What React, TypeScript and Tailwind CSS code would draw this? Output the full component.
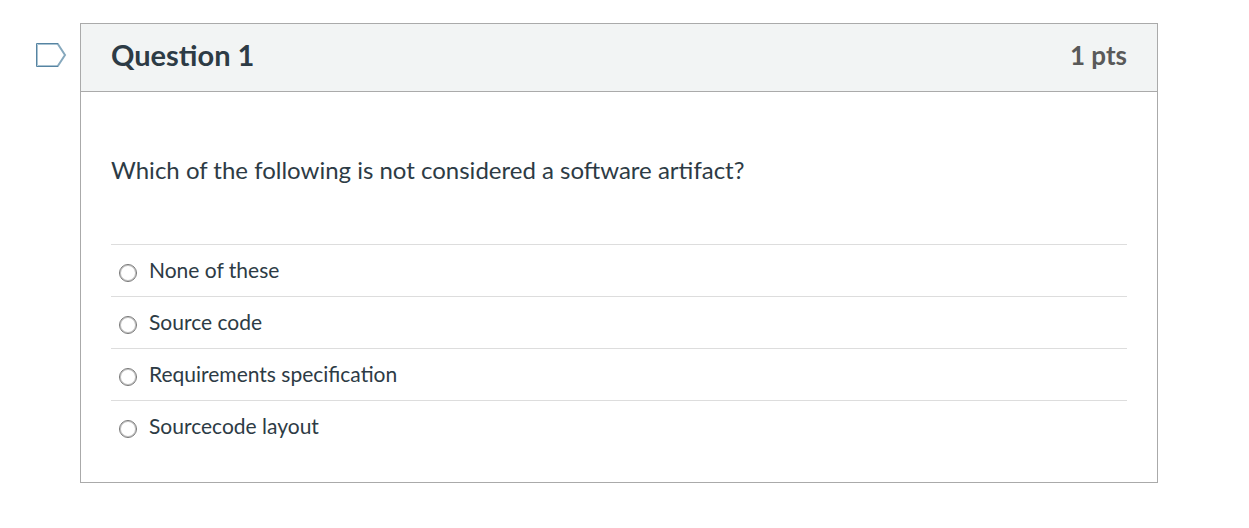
import React from "react";

const answers = [
  "None of these",
  "Source code",
  "Requirements specification",
  "Sourcecode layout",
];

function FlagIcon() {
  return (
    <svg width="32" height="26" viewBox="0 0 32 26" fill="none" aria-hidden="true">
      <path d="M22.5 2.5H2.5v21H22.5" stroke="#a9c3d2" />
      <path d="M22.5 1.5L30 13L22.5 24.5" stroke="#86a8bd" strokeWidth="2" />
      <path d="M23 24.5H1.5v-23H23" stroke="#5684a2" />
    </svg>
  );
}

export default function App() {
  return (
    <main className="flex items-start bg-white pt-[23px] pr-[91px] pb-11 pl-[35px] font-['Lato',sans-serif] text-[#2d3b45]">
      <button type="button" aria-label="Flag question" className="mt-[19px] w-[45px] shrink-0">
        <FlagIcon />
      </button>
      <section className="min-w-0 flex-1 border border-[#aaaaaa]">
        <header className="flex items-center justify-between border-b border-[#aaaaaa] bg-[#f2f4f4] px-[30px] pt-[11px] pb-4">
          <h2 className="text-[29px] leading-10 font-bold">Question 1</h2>
          <span className="text-[26px] leading-10 font-bold text-[#595959]">1 pts</span>
        </header>
        <form className="px-[30px] pt-[59px] pb-[30px]">
          <fieldset>
            <legend className="mb-[55px] text-[24px] leading-[38px]">
              Which of the following is not considered a software artifact?
            </legend>
            {answers.map((answer, index) => (
              <label
                key={answer}
                className="flex h-[52px] items-start border-t border-[#dddddd] pt-[9px] pl-2"
              >
                <input
                  type="radio"
                  name="answer"
                  value={index}
                  className="mt-[10px] mr-3 size-[18px] shrink-0 appearance-none rounded-full border border-[#767676] bg-white shadow-[inset_0_0_0_1px_#c4c4c4] checked:border-[5px] checked:border-[#0075ff] checked:shadow-none"
                />
                <span className="text-[21px] leading-8">{answer}</span>
              </label>
            ))}
          </fieldset>
        </form>
      </section>
    </main>
  );
}
